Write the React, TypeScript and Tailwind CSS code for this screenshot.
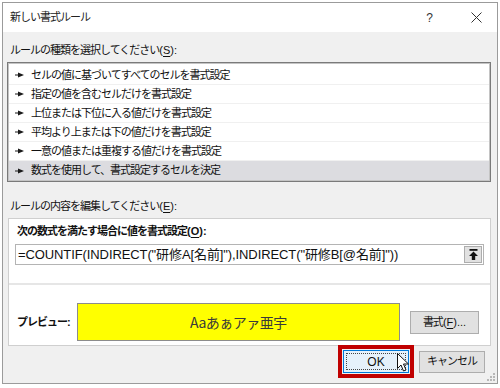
import React from "react";

const FONT = "font-['Liberation_Sans','Noto_Sans_CJK_JP',sans-serif]";

const RULES = [
  "セルの値に基づいてすべてのセルを書式設定",
  "指定の値を含むセルだけを書式設定",
  "上位または下位に入る値だけを書式設定",
  "平均より上または下の値だけを書式設定",
  "一意の値または重複する値だけを書式設定",
  "数式を使用して、書式設定するセルを決定",
];

// 行頭の ► マーク
const Bullet = () => (
  <svg width="9" height="6" viewBox="0 0 9 6" className="shrink-0">
    <rect x="0" y="2.5" width="4" height="1" fill="#1a1a1a" />
    <polygon points="3,0.5 9,3 3,5.5" fill="#1a1a1a" />
  </svg>
);

const Jp = ({ children, className = "" }: { children: React.ReactNode; className?: string }) => (
  <span className={`text-[11px] tracking-[-1px] ${className}`}>{children}</span>
);

// アクセスキー付きの (X): 部分
const Key = ({ k, tail = ":" }: { k: string; tail?: string }) => (
  <span className="text-[11px] tracking-normal">
    (<span className="underline underline-offset-2">{k}</span>){tail}
  </span>
);

export default function App() {
  return (
    <div className={`w-[500px] h-[388px] bg-white pt-[2px] pl-[2px] ${FONT} text-[#111]`}>
      <div className="relative w-[496px] h-[382px] border border-[#9b9b9b] flex flex-col bg-[#f0f0f0]">
        {/* タイトルバー */}
        <div className="h-[29px] bg-white flex items-center pl-[7px] pr-[15px]">
          <Jp className="text-[#222]">新しい書式ルール</Jp>
          <span className="ml-auto text-[12px] text-[#333] mr-[38px]">?</span>
          <svg width="11" height="11" viewBox="0 0 11 11">
            <path d="M0.5 0.5 L10.5 10.5 M10.5 0.5 L0.5 10.5" stroke="#333" strokeWidth="1" />
          </svg>
        </div>

        <div className="flex flex-col px-[4px]">
          <div className="mt-[10px] h-[16px] flex items-center pl-[3px]">
            <Jp>ルールの種類を選択してください</Jp>
            <Key k="S" />
          </div>

          {/* ルールの種類リスト */}
          <div className="mt-[4px] h-[120px] border border-[#7a7a7a] mr-[2px]">
            <div className="h-full border border-[#c4c4c4] bg-white pt-[2px]">
              {RULES.map((r, i) => (
                <div
                  key={i}
                  className={`h-[19px] flex items-center gap-[7px] pl-[6px] ${
                    i === RULES.length - 1 ? "bg-[#dcdce0]" : "border-b border-[#f0f0f0]"
                  }`}
                >
                  <Bullet />
                  <Jp>{r}</Jp>
                </div>
              ))}
            </div>
          </div>

          <div className="mt-[16px] h-[16px] flex items-center pl-[3px]">
            <Jp>ルールの内容を編集してください</Jp>
            <Key k="E" />
          </div>

          {/* ルールの内容 */}
          <div className="mt-[4px] ml-px mr-[2px] h-[128px] border border-[#cfcfcf] bg-white flex flex-col">
            <div className="px-[6px] pt-[4px]">
              <div className="h-[16px] flex items-center pl-[2px] font-bold">
                <Jp>次の数式を満たす場合に値を書式設定</Jp>
                <span className="text-[11px] font-bold">
                  (<span className="underline underline-offset-2">O</span>):
                </span>
              </div>
              <div className="mt-[5px] h-[21px] border border-[#b4b4b4] flex items-center pl-[2px] pr-[1px]">
                <span className="text-[13px] tracking-[-0.1px] text-[#111] whitespace-nowrap">
                  =COUNTIF(INDIRECT("研修A[名前]"),INDIRECT("研修B[@名前]"))
                </span>
                <div className="ml-auto w-[18px] h-[17px] bg-[#e1e1e1] border border-[#adadad] flex items-center justify-center">
                  <svg width="9" height="11" viewBox="0 0 9 11">
                    <rect x="0.5" y="0" width="8" height="1.8" fill="#111" />
                    <polygon points="4.5,2.5 9,7 6.2,7 6.2,11 2.8,11 2.8,7 0,7" fill="#111" />
                  </svg>
                </div>
              </div>
            </div>
            <div className="mt-[18px] h-[2px] bg-[#e6e6e6]" />
            <div className="flex items-center pl-[8px] pr-[11px] mt-[18px]">
              <span className="text-[11px] font-bold tracking-[-1px] w-[60px]">プレビュー:</span>
              <div className="w-[323px] h-[38px] border border-[#8c8c8c] bg-[#ffff00] flex items-center justify-center">
                <span className="text-[14px] text-[#3a3a3a] font-['Noto_Sans_CJK_JP',sans-serif] tracking-[-0.5px]">
                  Aaあぁアァ亜宇
                </span>
              </div>
              <button className="ml-auto w-[69px] h-[23px] bg-[#e1e1e1] border border-[#adadad] flex items-center justify-center">
                <Jp>書式</Jp>
                <span className="text-[11px]">
                  (<span className="underline underline-offset-2">F</span>)...
                </span>
              </button>
            </div>
          </div>

          {/* OK / キャンセル */}
          <div className="flex items-center justify-end gap-[5px] pr-[8px] h-[33px] -mt-px">
            <div className="border-4 border-[#c00000] p-px">
              <button className="relative w-[66px] h-[23px] bg-[#e5f1fb] border border-[#0078d7] flex items-center justify-center">
                <div className="absolute inset-[2px] border border-dotted border-[#444]" />
                <span className="text-[12px]">OK</span>
                <svg className="absolute left-[53px] top-[2px]" width="12" height="19" viewBox="0 0 12 19">
                  <path d="M0.5 0.5 L0.5 15.5 L4 12 L6.5 18 L9 17 L6.5 11 L11.5 11 Z" fill="#fff" stroke="#111" strokeWidth="1" strokeLinejoin="round" />
                </svg>
              </button>
            </div>
            <button className="w-[66px] h-[22px] bg-[#e1e1e1] border border-[#adadad] flex items-center justify-center">
              <Jp>キャンセル</Jp>
            </button>
          </div>
        </div>

        {/* サイズグリップ */}
        <svg className="absolute right-[2px] bottom-[2px]" width="8" height="8" viewBox="0 0 8 8">
          {[[6, 0], [6, 3], [3, 3], [6, 6], [3, 6], [0, 6]].map(([x, y], i) => (
            <rect key={i} x={x} y={y} width="2" height="2" fill="#b8b8b8" />
          ))}
        </svg>
      </div>
    </div>
  );
}
